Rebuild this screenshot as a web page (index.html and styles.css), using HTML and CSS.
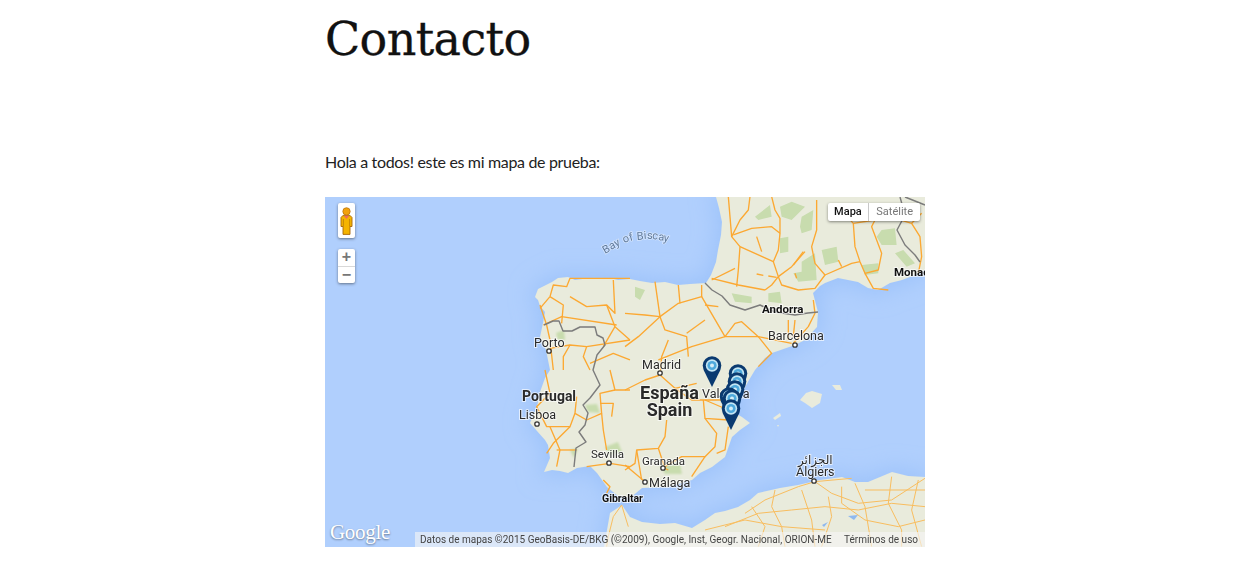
FILE: index.html
```html
<!DOCTYPE html>
<html lang="es">
<head>
<meta charset="utf-8">
<title>Contacto</title>
<link rel="stylesheet" href="styles.css">
</head>
<body>
<main class="page">
  <h1 class="title">Contacto</h1>
  <p class="intro">Hola a todos! este es mi mapa de prueba:</p>
  <div class="map">
    <svg class="map-canvas" viewBox="325 197 600 350" width="600" height="350" xmlns="http://www.w3.org/2000/svg">
      <defs>
        <filter id="glow" x="-20%" y="-20%" width="140%" height="140%"><feGaussianBlur stdDeviation="11"/></filter>
        <filter id="soft" x="-20%" y="-20%" width="140%" height="140%"><feGaussianBlur stdDeviation=".8"/></filter>
        <filter id="ink" x="-5%" y="-5%" width="110%" height="110%"><feGaussianBlur stdDeviation=".35"/></filter>
        <g id="pin">
          <path d="M-8.6 -17.5 L0 0 L8.6 -17.5Z" fill="#0a3a70"/>
          <circle cx="0" cy="-21.5" r="9.3" fill="#0a3a70"/>
          <circle cx="0" cy="-21.5" r="6.2" fill="#c4e6f4"/>
          <circle cx="0" cy="-21.5" r="4.6" fill="#4ea9dc"/>
          <circle cx="0" cy="-21.5" r="2" fill="#d5eef8"/>
        </g>
        <path id="land" d="M716 197 L719 208 L722 222 L721 235 L718 250 L716 262 L711 275 L706 283 L690 284 L678 285 L665 282 L652 283 L640 281 L630 279 L618 280 L610 278 L590 278 L575 280 L568 277 L558 278 L552 282 L548 284 L538 289 L535 297 L538 300 L540 306 L545 312 L543 323 L540 337 L546 350 L550 370 L545 378 L540 392 L537 407 L530 423 L537 431 L545 440 L548 445 L550 458 L544 472 L552 470 L560 471 L568 473 L577 468 L590 466 L597 473 L602 480 L607 487 L618 496 L630 498 L642 488 L668 487 L692 480 L700 473 L712 467 L725 457 L732 437 L740 430 L750 423 L742 417 L735 413 L742 393 L749 380 L755 370 L765 358 L772 353 L795 345 L805 340 L817 327 L818 312 L813 293 L820 286 L825 283 L838 278 L848 280 L858 282 L868 288 L878 290 L890 283 L902 280 L915 275 L925 270 L925 197Z"/>
        <path id="africa" d="M622 505 L630 517 L642 522 L660 524 L675 523 L692 528 L705 520 L715 513 L725 511 L738 507 L750 500 L758 493 L780 488 L798 485 L820 480 L842 477 L855 482 L868 482 L880 477 L892 472 L908 476 L925 477 L925 547 L604 547 L610 513Z"/>
      </defs>
      <rect x="325" y="197" width="600" height="350" fill="#b0cffd"/>

      <!-- coastal shading -->
      <g filter="url(#glow)" fill="#9cc2fa" stroke="#9cc2fa" stroke-width="8">
        <use href="#land"/>
        <use href="#africa"/>
      </g>

      <!-- land -->
      <g filter="url(#ink)">
        <use href="#land" fill="#e9ebdc"/>
        <use href="#africa" fill="#e9ebdc"/>
        <path fill="#e9ebdc" d="M800 400 L806 393 L812 391 L822 394 L820 403 L812 408 L805 403Z"/>
        <path fill="#e9ebdc" d="M832 385 L840 385 L842 390 L836 390Z"/>
        <path fill="#e9ebdc" d="M773 418 L780 413 L781 416 L775 420Z"/>
        <path fill="#e9ebdc" d="M777 425 L779 425 L778 427Z"/>
      </g>

      <!-- forest, north -->
      <g transform="translate(625 190) scale(.3333)" filter="url(#soft)" fill="#c8dcae">
        <path d="M390 80 L435 45 L440 80 L400 90Z"/>
        <path d="M465 50 L500 35 L540 50 L500 90 L470 80Z"/>
        <path d="M530 80 L565 60 L560 120 L530 130 L525 110Z"/>
        <path d="M465 145 L490 140 L490 185 L465 190Z"/>
        <path d="M590 180 L635 170 L640 215 L600 225Z"/>
        <path d="M530 215 L570 190 L575 270 L520 275 L505 250 L530 245Z"/>
        <path d="M710 225 L760 220 L760 250 L720 255Z"/>
        <path d="M770 120 L810 115 L815 165 L770 165 L755 140Z"/>
        <path d="M810 190 L835 180 L870 220 L845 230Z"/>
        <path d="M320 310 L380 320 L380 340 L330 335Z"/>
        <path d="M430 310 L465 305 L470 340 L430 335Z"/>
        <path d="M30 290 L60 300 L45 330 L30 320Z"/>
      </g>
      <g fill="#c8dcae" filter="url(#soft)">
        <path d="M556 333 L564 330 L565 340 L558 340Z"/>
        <path d="M585 405 L597 404 L600 413 L588 412Z"/>
        <path d="M570 450 L578 448 L574 458Z"/>
        <path d="M605 447 L618 442 L622 452 L610 455Z"/>
        <path d="M660 465 L680 464 L682 474 L665 474Z"/>
      </g>

      <g filter="url(#ink)">
      <!-- roads north-east, traced from the map at 3x -->
      <g class="road" transform="translate(625 190) scale(.3333)">
        <path d="M310 20 L315 80 L320 140 L345 170 L340 240 L335 290"/>
        <path d="M375 20 L370 60 L345 90 L320 140"/>
        <path d="M440 20 L450 60 L465 85 L465 130 L440 110 L380 115 L325 135"/>
        <path d="M465 130 L460 180 L445 215 L345 170"/>
        <path d="M445 215 L460 260 L440 285 L420 300"/>
        <path d="M460 260 L500 230 L540 185"/>
        <path d="M575 30 L575 120 L560 170 L570 220 L600 255 L570 295 L520 300 L470 285 L460 260"/>
        <path d="M600 255 L680 220 L705 215"/>
        <path d="M685 100 L690 170 L705 215 L720 250 L745 295 L790 300"/>
        <path d="M750 90 L740 110 L770 190 L760 240 L720 250"/>
        <path d="M860 100 L885 140 L890 200 L880 250"/>
        <path d="M260 270 L330 235"/>
        <path d="M260 265 L340 285 L420 300"/>
        <path d="M0 370 L60 375 L105 380 L160 340 L230 320 L230 285"/>
        <path d="M105 380 L90 275"/>
        <path d="M160 285 L165 340"/>
        <path d="M240 345 L280 350"/>
        <path d="M230 320 L300 440 L400 440 L500 460"/>
        <path d="M300 440 L330 400 L350 395 L400 440"/>
        <path d="M300 440 L200 470 L100 510"/>
        <path d="M105 380 L40 440 L0 470"/>
        <path d="M105 380 L120 420 L185 440 L190 500"/>
        <path d="M185 430 L240 390"/>
        <path d="M490 390 L490 450"/>
        <path d="M510 390 L505 440"/>
        <path d="M565 330 L570 370 L550 410 L505 460"/>
        <path d="M400 440 L440 490 L400 530"/>
        <path d="M395 140 L410 185"/>
        <path d="M395 252 L415 256"/>
        <path d="M430 258 L455 262"/>
        <path d="M505 225 L535 185"/>
        <path d="M510 250 L515 265"/>
        <path d="M640 210 L650 230"/>
        <path d="M780 60 L810 85 L860 100 L890 70"/>
        <path d="M630 40 L685 100 L750 90"/>
      </g>
      <!-- roads north-west -->
      <g class="road" transform="translate(320 190) scale(.3333)">
        <path d="M930 265 L880 265 L820 265 L750 265 L740 290 L700 285 L690 320"/>
        <path d="M690 320 L660 355"/>
        <path d="M690 320 L730 345 L725 400"/>
        <path d="M750 320 L800 350 L860 345 L885 370 L880 270"/>
        <path d="M860 345 L885 410 L930 450"/>
        <path d="M670 405 L725 380 L890 405"/>
        <path d="M660 345 L680 405 L690 450 L700 540"/>
        <path d="M690 475 L750 465 L800 470 L790 500 L810 540"/>
        <path d="M730 540 L730 500 L750 465"/>
        <path d="M850 470 L885 410"/>
        <path d="M800 470 L930 450"/>
        <path d="M810 520 L880 490 L930 510"/>
      </g>
      <!-- roads south-west -->
      <g class="road" transform="translate(320 370) scale(.3333)">
        <path d="M675 0 L690 70 L650 110 L680 170 L750 170 L765 130 L770 80"/>
        <path d="M690 170 L720 240 L710 290"/>
        <path d="M750 170 L700 220 L680 250"/>
        <path d="M710 240 L770 240"/>
        <path d="M885 60 L840 70 L845 130 L800 150 L765 130"/>
        <path d="M840 100 L880 100 L875 140"/>
        <path d="M845 130 L850 180 L860 240"/>
        <path d="M870 280 L930 290"/>
        <path d="M870 280 L800 290"/>
        <path d="M850 330 L870 350 L860 370"/>
        <path d="M870 0 L885 60 L930 60"/>
      </g>
      <!-- roads south-east -->
      <g class="road" transform="translate(625 370) scale(.3333)">
        <path d="M0 60 L60 30 L105 15 L150 55 L215 40"/>
        <path d="M150 55 L200 90 L310 90"/>
        <path d="M235 90 L240 145 L310 150"/>
        <path d="M125 150 L120 200 L100 235 L35 240 L30 280 L0 300"/>
        <path d="M100 235 L120 295 L130 300"/>
        <path d="M240 145 L275 190 L270 230 L240 260 L170 260 L120 290"/>
        <path d="M240 260 L200 320"/>
        <path d="M310 170 L300 240 L275 250"/>
        <path d="M35 240 L50 330"/>
        <path d="M0 285 L60 335"/>
        <path d="M310 120 L240 90"/>
        <path d="M105 15 L110 -40 L130 -90"/>
      </g>
      <!-- Africa -->
      <g class="road-thin" transform="translate(625 370) scale(.3333)">
        <path d="M360 430 L420 390 L520 350 L570 335 L680 325"/>
        <path d="M570 335 L620 370 L700 400 L800 390 L900 325"/>
        <path d="M300 470 L400 430 L500 420 L600 410 L700 420 L800 400 L900 410"/>
        <path d="M240 480 L360 450 L470 470 L600 480"/>
        <path d="M450 360 L440 410 L470 470 L480 530"/>
        <path d="M530 360 L560 450 L570 530"/>
        <path d="M610 380 L620 440 L590 530"/>
        <path d="M690 340 L720 410 L740 530"/>
        <path d="M800 320 L790 400 L830 480 L830 530"/>
        <path d="M880 330 L860 420 L890 530"/>
        <path d="M650 350 L650 400 L720 450 L820 470"/>
        <path d="M380 410 L420 470 L400 530"/>
        <path d="M720 360 L900 360"/>
        <path d="M820 470 L900 450"/>
      </g>
      <g class="road-thin" transform="translate(320 370) scale(.3333)">
        <path d="M905 405 L880 440 L865 500 L860 530"/>
        <path d="M905 405 L925 470"/>
      </g>

      <!-- borders -->
      <g fill="none" stroke="#7b7b7b" stroke-width="1.4" stroke-linejoin="round">
        <path d="M544 325 L553 321 L559 321 L563 331 L572 331 L580 327 L595 327 L597 335 L603 338 L605 345 L597 355 L593 370 L600 385 L590 398 L583 405 L588 413 L585 425 L579 432 L586 442 L576 448 L574 467"/>
        <path d="M705 283 L712 290 L722 296 L730 305 L745 310 L760 305 L775 312 L795 315 L808 313 L818 312"/>
        <path d="M900 197 L905 215 L897 230 L905 245 L915 255 L920 262"/>
        <path d="M905 197 L925 205"/>
      </g>

      <!-- lakes -->
      <path d="M848 516 L858 515 L854 520Z" fill="#8eb8ef"/>
      <path d="M822 525 L828 522 L824 527Z" fill="#8eb8ef"/>
      </g>

      <!-- labels -->
      <g class="labels">
        <text x="534" y="347">Porto</text>
        <text x="642" y="369">Madrid</text>
        <text x="522" y="401" class="bold-14">Portugal</text>
        <text x="519" y="419">Lisboa</text>
        <text x="702" y="398">Valencia</text>
        <text x="591" y="458" class="small">Sevilla</text>
        <text x="642" y="465" class="small">Granada</text>
        <text x="649" y="487">Málaga</text>
        <text x="602" y="502" class="bold-10">Gibraltar</text>
        <text x="762" y="313" class="bold-11">Andorra</text>
        <text x="768" y="340">Barcelona</text>
        <text x="894" y="276" class="bold-11">Monaco</text>
        <text x="796" y="476">Algiers</text>
        <text x="798" y="464" class="arabic">الجزائر</text>
        <text x="669.5" y="399" class="country">España</text>
        <text x="669.5" y="416" class="country">Spain</text>
      </g>
      <text class="bay"
        x="605 611 616 621 624 630 635 637 644 647 652 658 663"
        y="254 250 247 245 243 241 240 240 239 239 239 240 241"
        rotate="-30 -28 -25 -20 -20 -15 -10 -5 -5 0 5 8 12">Bay of Biscay</text>

      <!-- city dots -->
      <g fill="#fff" stroke="#333" stroke-width="1.3">
        <circle cx="549" cy="351" r="2.2"/>
        <circle cx="660" cy="373" r="2.2"/>
        <circle cx="537" cy="424" r="2.2"/>
        <circle cx="609" cy="463" r="2.2"/>
        <circle cx="663" cy="468" r="2.2"/>
        <circle cx="645" cy="482" r="2.2"/>
        <circle cx="795" cy="345" r="2.2"/>
        <circle cx="814" cy="481" r="2.2"/>
      </g>

      <!-- markers -->
      <use href="#pin" x="712" y="387"/>
      <use href="#pin" x="738" y="395"/>
      <use href="#pin" x="737" y="403"/>
      <use href="#pin" x="735" y="411"/>
      <use href="#pin" x="729" y="418"/>
      <use href="#pin" x="732" y="420"/>
      <use href="#pin" x="731" y="430"/>
    </svg>

    <div class="pegman">
      <svg width="13" height="28" viewBox="0 0 13 28" xmlns="http://www.w3.org/2000/svg">
        <circle cx="6.5" cy="4.4" r="3.7" fill="#f2a20c" stroke="#b46e08" stroke-width=".7"/>
        <path d="M2.8 8.6 H10.2 L12 10.5 V19.5 H10 V27.4 H3 V19.5 H1 V10.5Z" fill="#f5b400" stroke="#a8680a" stroke-width=".9"/>
        <path d="M3.8 8.7 H9.2 L6.5 12Z" fill="#ee6a5e"/>
        <path d="M3.4 12 V19.5 M9.6 12 V19.5" stroke="#a8680a" stroke-width=".6"/>
      </svg>
    </div>
    <div class="zoom">
      <span class="zoom-btn">+</span>
      <span class="zoom-btn">−</span>
    </div>
    <div class="map-type">
      <span class="type-btn active">Mapa</span>
      <span class="type-btn">Satélite</span>
    </div>
    <div class="google">Google</div>
    <div class="attribution">
      <span>Datos de mapas ©2015 GeoBasis-DE/BKG (©2009), Google, Inst, Geogr. Nacional, ORION-ME</span>
      <span>Términos de uso</span>
    </div>
  </div>
</main>
</body>
</html>
```

FILE: styles.css
```css
* { box-sizing: border-box; }
html, body { margin: 0; padding: 0; background: #fff; }
body { height: 573px; overflow: hidden; }

.page {
  width: 600px;
  margin-left: 325px;
  display: flex;
  flex-direction: column;
}
.title {
  margin: 0;
  padding-top: 9px;
  height: 140px;
  font-family: "DejaVu Serif", serif;
  font-weight: 400;
  font-size: 46px;
  line-height: 60px;
  letter-spacing: -.6px;
  color: #111;
  -webkit-text-stroke: .3px #111;
}
.intro {
  margin: 0;
  height: 57px;
  padding-top: 12px;
  font-family: Lato, sans-serif;
  font-size: 16px;
  line-height: 20px;
  letter-spacing: -.33px;
  color: #222;
}
.map {
  position: relative;
  width: 600px;
  height: 350px;
  overflow: hidden;
}
.map-canvas { display: block; }

.road path {
  fill: none;
  stroke: #fca831;
  stroke-width: 4px;
  stroke-linejoin: round;
}
.road-thin path {
  fill: none;
  stroke: #f8bd5e;
  stroke-width: 3px;
  stroke-linejoin: round;
}

.labels text {
  font-family: Roboto, sans-serif;
  font-size: 12.5px;
  fill: #2a2a2a;
  stroke: rgba(255,255,255,.65);
  stroke-width: 2px;
  paint-order: stroke;
}
.labels .small { font-size: 11.5px; }
.labels .bold-14 { font-size: 14px; font-weight: 700; }
.labels .bold-11 { font-size: 11.5px; font-weight: 700; fill: #111; }
.labels .bold-10 { font-size: 10.5px; font-weight: 700; fill: #111; }
.labels .arabic { font-family: "DejaVu Sans", sans-serif; font-size: 12px; }
.labels .country {
  font-size: 18px;
  font-weight: 700;
  text-anchor: middle;
}
.bay {
  font-family: Roboto, sans-serif;
  font-size: 11px;
  fill: #5f7a9c;
  stroke: rgba(255,255,255,.5);
  stroke-width: 1.5px;
  paint-order: stroke;
}

.pegman, .zoom, .map-type {
  position: absolute;
  background: #fff;
  border-radius: 2px;
  box-shadow: 0 1px 3px rgba(0,0,0,.45);
}
.pegman {
  left: 13px;
  top: 6px;
  width: 17px;
  height: 35px;
  display: flex;
  align-items: center;
  justify-content: center;
}
.zoom {
  left: 13px;
  top: 52px;
  width: 17px;
  height: 34px;
  display: flex;
  flex-direction: column;
}
.zoom-btn {
  flex: 1;
  display: flex;
  align-items: center;
  justify-content: center;
  font-family: "Liberation Sans", sans-serif;
  font-size: 16px;
  font-weight: 700;
  line-height: 1;
  color: #777;
  overflow: hidden;
}
.zoom-btn + .zoom-btn { border-top: 1px solid #d8d8d8; }
.map-type {
  right: 5px;
  top: 6px;
  height: 18px;
  display: flex;
  font-family: Roboto, sans-serif;
  font-size: 11px;
  line-height: 18px;
  color: #777;
}
.type-btn { padding: 0 7px; }
.type-btn.active {
  color: #111;
  font-weight: 500;
  padding: 0 6.5px;
  border-right: 1px solid #c8c8c8;
}
.google {
  position: absolute;
  left: 5px;
  bottom: 3px;
  font-family: "Liberation Serif", serif;
  font-size: 21px;
  line-height: 24px;
  letter-spacing: -.3px;
  color: #fff;
  text-shadow: 0 1px 2px rgba(0,0,0,.45);
}
.attribution {
  position: absolute;
  right: 0;
  bottom: 0;
  width: 510px;
  height: 15px;
  padding: 0 7px 0 5px;
  display: flex;
  justify-content: space-between;
  background: rgba(245,245,245,.62);
  font-family: Roboto, sans-serif;
  font-size: 10px;
  line-height: 15px;
  color: #444;
  white-space: nowrap;
}
```
